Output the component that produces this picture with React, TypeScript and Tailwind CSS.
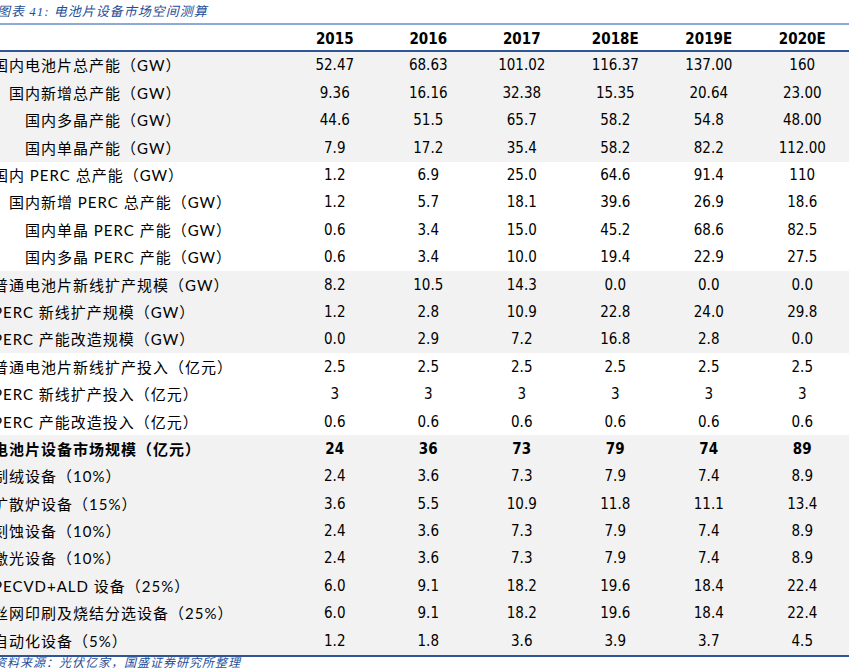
type Row = { label: string; level: 0 | 1 | 2; values: string[]; gray: boolean; bold?: boolean }

const rows: Row[] = [
  { label: '国内电池片总产能（GW）', level: 0, values: ['52.47', '68.63', '101.02', '116.37', '137.00', '160'], gray: true },
  { label: '国内新增总产能（GW）', level: 1, values: ['9.36', '16.16', '32.38', '15.35', '20.64', '23.00'], gray: true },
  { label: '国内多晶产能（GW）', level: 2, values: ['44.6', '51.5', '65.7', '58.2', '54.8', '48.00'], gray: true },
  { label: '国内单晶产能（GW）', level: 2, values: ['7.9', '17.2', '35.4', '58.2', '82.2', '112.00'], gray: true },
  { label: '国内 PERC 总产能（GW）', level: 0, values: ['1.2', '6.9', '25.0', '64.6', '91.4', '110'], gray: false },
  { label: '国内新增 PERC 总产能（GW）', level: 1, values: ['1.2', '5.7', '18.1', '39.6', '26.9', '18.6'], gray: false },
  { label: '国内单晶 PERC 产能（GW）', level: 2, values: ['0.6', '3.4', '15.0', '45.2', '68.6', '82.5'], gray: false },
  { label: '国内多晶 PERC 产能（GW）', level: 2, values: ['0.6', '3.4', '10.0', '19.4', '22.9', '27.5'], gray: false },
  { label: '普通电池片新线扩产规模（GW）', level: 0, values: ['8.2', '10.5', '14.3', '0.0', '0.0', '0.0'], gray: true },
  { label: 'PERC 新线扩产规模（GW）', level: 0, values: ['1.2', '2.8', '10.9', '22.8', '24.0', '29.8'], gray: true },
  { label: 'PERC 产能改造规模（GW）', level: 0, values: ['0.0', '2.9', '7.2', '16.8', '2.8', '0.0'], gray: true },
  { label: '普通电池片新线扩产投入（亿元）', level: 0, values: ['2.5', '2.5', '2.5', '2.5', '2.5', '2.5'], gray: false },
  { label: 'PERC 新线扩产投入（亿元）', level: 0, values: ['3', '3', '3', '3', '3', '3'], gray: false },
  { label: 'PERC 产能改造投入（亿元）', level: 0, values: ['0.6', '0.6', '0.6', '0.6', '0.6', '0.6'], gray: false },
  { label: '电池片设备市场规模（亿元）', level: 0, values: ['24', '36', '73', '79', '74', '89'], gray: true, bold: true },
  { label: '制绒设备（10%）', level: 0, values: ['2.4', '3.6', '7.3', '7.9', '7.4', '8.9'], gray: true },
  { label: '扩散炉设备（15%）', level: 0, values: ['3.6', '5.5', '10.9', '11.8', '11.1', '13.4'], gray: true },
  { label: '刻蚀设备（10%）', level: 0, values: ['2.4', '3.6', '7.3', '7.9', '7.4', '8.9'], gray: true },
  { label: '激光设备（10%）', level: 0, values: ['2.4', '3.6', '7.3', '7.9', '7.4', '8.9'], gray: true },
  { label: 'PECVD+ALD 设备（25%）', level: 0, values: ['6.0', '9.1', '18.2', '19.6', '18.4', '22.4'], gray: true },
  { label: '丝网印刷及烧结分选设备（25%）', level: 0, values: ['6.0', '9.1', '18.2', '19.6', '18.4', '22.4'], gray: true },
  { label: '自动化设备（5%）', level: 0, values: ['1.2', '1.8', '3.6', '3.9', '3.7', '4.5'], gray: true },
]

const years = ['2015', '2016', '2017', '2018E', '2019E', '2020E']

const indent = ['pl-0', 'pl-[16px]', 'pl-[32px]']

export default function App() {
  return (
    <div className="w-[860px] h-[672px] bg-white overflow-hidden">
      <div className="ml-[-7px] w-[856px]">
        <div className="h-[23px] pl-[4px] flex items-center text-[13px] italic text-[#1f4e9a] font-['Liberation_Serif','Noto_Sans_CJK_SC',serif] tracking-[1px]">
          图表 41: 电池片设备市场空间测算
        </div>

        <div className="border-t-2 border-[#8eaadb]">
          <div className="h-[27px] pt-[3px] grid grid-cols-[295px_repeat(6,1fr)] items-center border-b-2 border-[#2f5597] font-['DejaVu_Sans_Condensed','DejaVu_Sans',sans-serif] font-bold text-[15px] text-black">
            <div />
            {years.map((y) => (
              <div key={y} className="text-center">{y}</div>
            ))}
          </div>

          {rows.map((r) => (
            <div
              key={r.label}
              className={`h-[27.4px] grid grid-cols-[295px_repeat(6,1fr)] items-center text-black ${r.gray ? 'bg-[#f2f2f2]' : 'bg-white'} ${r.bold ? 'font-bold' : ''}`}
            >
              <div className={`${indent[r.level]} whitespace-nowrap text-[15px] tracking-[1px] font-['Lato','Noto_Sans_CJK_SC',sans-serif]`}>
                {r.label}
              </div>
              {r.values.map((v, i) => (
                <div key={i} className="text-center text-[15px] font-['DejaVu_Sans_Condensed','DejaVu_Sans',sans-serif]">{v}</div>
              ))}
            </div>
          ))}
        </div>

        <div className="border-t-2 border-[#2f5597] h-[15px] pl-[1px] flex items-center text-[12px] italic text-[#1f4e9a] font-['Liberation_Serif','Noto_Sans_CJK_SC',serif] tracking-[1px]">
          资料来源：光伏亿家，国盛证券研究所整理
        </div>
      </div>
    </div>
  )
}
